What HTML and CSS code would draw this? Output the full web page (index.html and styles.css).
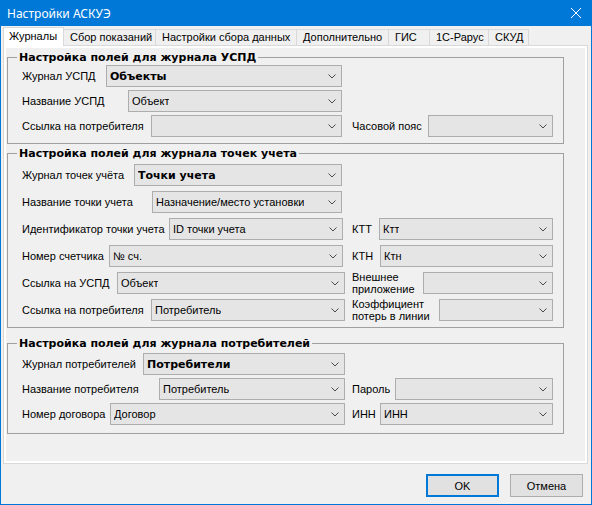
FILE: index.html
```html
<!DOCTYPE html>
<html lang="ru">
<head>
<meta charset="utf-8">
<title>Настройки АСКУЭ</title>
<link rel="stylesheet" href="styles.css">
</head>
<body>
<svg class="defs" width="0" height="0">
  <symbol id="chev" viewBox="0 0 8 5"><path d="M0.5 0.5 L4 4 L7.5 0.5" fill="none" stroke="#4a4a4a" stroke-width="1"/></symbol>
</svg>
<div class="window">
  <div class="titlebar">
    <span class="title">Настройки АСКУЭ</span>
    <span class="close"><svg width="10" height="10" viewBox="0 0 10 10"><path d="M0 0 L10 10 M10 0 L0 10" stroke="#fff" stroke-width="1"/></svg></span>
  </div>
  <div class="tabstrip">
    <div class="tab active t-journals">Журналы</div>
    <div class="tab t-readings">Сбор показаний</div>
    <div class="tab t-collect">Настройки сбора данных</div>
    <div class="tab t-extra">Дополнительно</div>
    <div class="tab t-gis">ГИС</div>
    <div class="tab t-rarus">1С-Рарус</div>
    <div class="tab t-skud">СКУД</div>
  </div>
  <div class="pagecontrol">
    <div class="sheet">
      <fieldset class="group g1">
        <legend>Настройка полей для журнала УСПД</legend>
        <div class="rows">
          <div class="row">
            <div class="left"><span class="lbl w84">Журнал УСПД</span><div class="combo"><span class="val bold">Объекты</span><svg class="chev"><use href="#chev"/></svg></div></div>
          </div>
          <div class="row">
            <div class="left"><span class="lbl w106">Название УСПД</span><div class="combo"><span class="val">Объект</span><svg class="chev"><use href="#chev"/></svg></div></div>
          </div>
          <div class="row">
            <div class="left"><span class="lbl w129">Ссылка на потребителя</span><div class="combo"><span class="val"></span><svg class="chev"><use href="#chev"/></svg></div></div>
            <div class="right"><span class="lbl w76">Часовой пояс</span><div class="combo"><span class="val"></span><svg class="chev"><use href="#chev"/></svg></div></div>
          </div>
        </div>
      </fieldset>

      <fieldset class="group g2">
        <legend>Настройка полей для журнала точек учета</legend>
        <div class="rows">
          <div class="row">
            <div class="left"><span class="lbl w112">Журнал точек учёта</span><div class="combo"><span class="val bold">Точки учета</span><svg class="chev"><use href="#chev"/></svg></div></div>
          </div>
          <div class="row">
            <div class="left"><span class="lbl w130">Название точки учета</span><div class="combo"><span class="val">Назначение/место установки</span><svg class="chev"><use href="#chev"/></svg></div></div>
          </div>
          <div class="row">
            <div class="left mid"><span class="lbl w147">Идентификатор точки учета</span><div class="combo"><span class="val">ID точки учета</span><svg class="chev"><use href="#chev"/></svg></div></div>
            <div class="right"><span class="lbl w27">КТТ</span><div class="combo"><span class="val">Ктт</span><svg class="chev"><use href="#chev"/></svg></div></div>
          </div>
          <div class="row">
            <div class="left mid"><span class="lbl w87">Номер счетчика</span><div class="combo"><span class="val">№ сч.</span><svg class="chev"><use href="#chev"/></svg></div></div>
            <div class="right"><span class="lbl w28">КТН</span><div class="combo"><span class="val">Ктн</span><svg class="chev"><use href="#chev"/></svg></div></div>
          </div>
          <div class="row">
            <div class="left long"><span class="lbl w95">Ссылка на УСПД</span><div class="combo"><span class="val">Объект</span><svg class="chev"><use href="#chev"/></svg></div></div>
            <div class="right"><span class="lbl w71 two">Внешнее<br>приложение</span><div class="combo"><span class="val"></span><svg class="chev"><use href="#chev"/></svg></div></div>
          </div>
          <div class="row">
            <div class="left long"><span class="lbl w129">Ссылка на потребителя</span><div class="combo"><span class="val">Потребитель</span><svg class="chev"><use href="#chev"/></svg></div></div>
            <div class="right"><span class="lbl w87 two">Коэффициент<br>потерь в линии</span><div class="combo"><span class="val"></span><svg class="chev"><use href="#chev"/></svg></div></div>
          </div>
        </div>
      </fieldset>

      <fieldset class="group g3">
        <legend>Настройка полей для журнала потребителей</legend>
        <div class="rows">
          <div class="row">
            <div class="left long"><span class="lbl w121">Журнал потребителей</span><div class="combo"><span class="val bold">Потребители</span><svg class="chev"><use href="#chev"/></svg></div></div>
          </div>
          <div class="row">
            <div class="left long"><span class="lbl w137">Название потребителя</span><div class="combo"><span class="val">Потребитель</span><svg class="chev"><use href="#chev"/></svg></div></div>
            <div class="right"><span class="lbl w43">Пароль</span><div class="combo"><span class="val"></span><svg class="chev"><use href="#chev"/></svg></div></div>
          </div>
          <div class="row">
            <div class="left long"><span class="lbl w88">Номер договора</span><div class="combo"><span class="val">Договор</span><svg class="chev"><use href="#chev"/></svg></div></div>
            <div class="right"><span class="lbl w28">ИНН</span><div class="combo"><span class="val">ИНН</span><svg class="chev"><use href="#chev"/></svg></div></div>
          </div>
        </div>
      </fieldset>
    </div>
  </div>
  <div class="footer">
    <button class="btn default">OK</button>
    <button class="btn">Отмена</button>
  </div>
</div>
</body>
</html>
```
FILE: styles.css
```css
* { box-sizing: border-box; }
html, body { margin: 0; padding: 0; }
body {
  width: 592px;
  height: 505px;
  overflow: hidden;
  background: #f0f0f0;
  font-family: "Liberation Sans", Arial, sans-serif;
  font-size: 11px;
  color: #000;
}
.defs { position: absolute; width: 0; height: 0; }

.window {
  width: 592px;
  height: 505px;
  border: 1px solid #0078d7;
  border-top: 0;
  display: flex;
  flex-direction: column;
  background: #f0f0f0;
}

.titlebar {
  flex: none;
  height: 26px;
  background: #0078d7;
  color: #fff;
  display: flex;
  align-items: center;
  justify-content: space-between;
  padding-left: 6px;
  font-family: "Noto Sans", "Open Sans", sans-serif;
  font-size: 12px;
}
.close {
  width: 30px;
  display: flex;
  justify-content: center;
  align-items: center;
}

.tabstrip {
  flex: none;
  display: flex;
  align-items: flex-end;
  height: 19px;
  margin-top: 1px;
  padding-left: 2px;
  position: relative;
  z-index: 2;
}
.tab {
  flex: none;
  height: 16px;
  margin-bottom: 1px;
  padding: 0 0 0 6px;
  border: 1px solid #d9d9d9;
  border-bottom: 0;
  border-left: 0;
  background: #f0f0f0;
  line-height: 15px;
  white-space: nowrap;
  overflow: hidden;
}
.tab.active {
  height: 19px;
  margin-bottom: 0;
  padding-left: 5px;
  border-left: 1px solid #d9d9d9;
  background: #fff;
  line-height: 17px;
  position: relative;
  z-index: 3;
}
.t-journals { width: 61px; }
.t-readings { width: 92px; }
.t-collect { width: 141px; }
.t-extra { width: 92px; }
.t-gis { width: 41px; }
.t-rarus { width: 59px; }
.t-skud { width: 40px; }

.pagecontrol {
  flex: none;
  height: 419px;
  margin: -1px 3px 0 2px;
  border: 1px solid #d9d9d9;
  background: #fff;
  padding: 2px;
  position: relative;
  z-index: 1;
}
.sheet {
  height: 100%;
  background: #f0f0f0;
  padding-left: 1px;
  padding-top: 0;
  display: flow-root;
}

.group {
  width: 557px;
  min-width: 0;
  margin: 0;
  border: 1px solid #a0a0a0;
  padding: 0 10px 0 14px;
}
.group legend {
  margin-left: -5px;
  padding: 0 2px;
  font-family: "DejaVu Sans", Verdana, sans-serif;
  font-weight: bold;
  font-size: 11px;
  line-height: 13px;
}
.g1 { margin-top: 3px; padding-top: 1px; padding-bottom: 6px; }
.g2 { margin-top: 3px; padding-top: 4px; padding-bottom: 6px; }
.g3 { margin-top: 9px; padding-top: 3px; padding-bottom: 8px; }

.rows { display: flex; flex-direction: column; gap: 3px; }
.g2 .rows { gap: 5px; }

.row {
  display: flex;
  justify-content: space-between;
  height: 22px;
}
.left { display: flex; align-items: center; width: 320px; }
.left.mid { width: 321px; }
.left.long { width: 323px; }
.right { display: flex; align-items: center; width: 201px; }

.lbl { flex: none; white-space: nowrap; }
.lbl.two { line-height: 12px; white-space: normal; }
.w27 { width: 27px; }
.w28 { width: 28px; }
.w43 { width: 43px; }
.w71 { width: 71px; }
.w76 { width: 76px; }
.w84 { width: 84px; }
.w87 { width: 87px; }
.w88 { width: 88px; }
.w95 { width: 95px; }
.w106 { width: 106px; }
.w112 { width: 112px; }
.w121 { width: 121px; }
.w129 { width: 129px; }
.w130 { width: 130px; }
.w137 { width: 137px; }
.w147 { width: 147px; }

.combo {
  flex: 1;
  min-width: 0;
  height: 22px;
  border: 1px solid #adadad;
  background: #e5e5e5;
  display: flex;
  align-items: center;
  justify-content: space-between;
  padding: 0 5px 0 3px;
}
.val { white-space: nowrap; overflow: hidden; }
.val.bold {
  font-family: "DejaVu Sans", Verdana, sans-serif;
  font-weight: bold;
  font-size: 11px;
}
.chev { flex: none; width: 8px; height: 5px; }

.footer {
  flex: 1;
  display: flex;
  justify-content: flex-end;
  align-items: flex-start;
  gap: 11px;
  padding: 10px 8px 0 0;
}
.btn {
  width: 73px;
  height: 23px;
  margin: 0;
  padding: 0;
  border: 1px solid #adadad;
  background: #e1e1e1;
  font-family: "Liberation Sans", Arial, sans-serif;
  font-size: 11px;
  color: #000;
}
.btn.default { border: 2px solid #0078d7; }
```
